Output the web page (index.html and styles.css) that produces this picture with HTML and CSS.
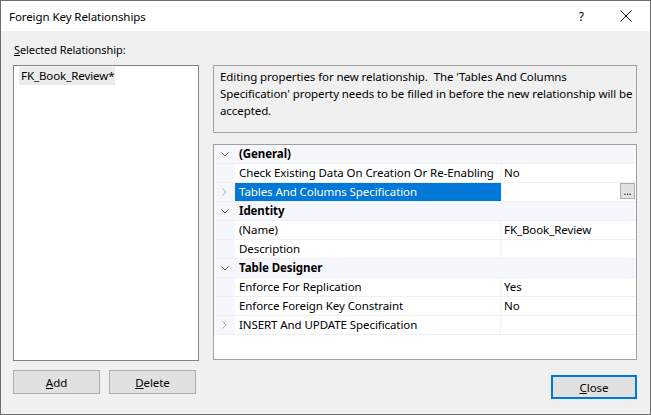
FILE: index.html
```html
<!DOCTYPE html>
<html>
<head>
<meta charset="utf-8">
<link rel="stylesheet" href="styles.css">
</head>
<body>
<div class="window">
  <div class="titlebar">
    <span class="title">Foreign Key Relationships</span>
    <span class="help">?</span>
    <svg class="close-x" width="12" height="12" viewBox="0 0 12 12"><path d="M0.5 0.5 L11.5 11.5 M11.5 0.5 L0.5 11.5" stroke="#000" stroke-width="1" fill="none"/></svg>
  </div>
  <div class="main">
    <div class="left">
      <div class="label"><u>S</u>elected Relationship:</div>
      <div class="listbox">
        <div class="list-item">FK_Book_Review*</div>
      </div>
      <div class="left-buttons">
        <button class="btn btn-add"><u>A</u>dd</button>
        <button class="btn btn-delete"><u>D</u>elete</button>
      </div>
    </div>
    <div class="right">
      <div class="desc">Editing properties for new relationship.&nbsp; The 'Tables And Columns<br>Specification' property needs to be filled in before the new relationship will be<br>accepted.</div>
      <div class="grid">
        <div class="row cat"><span class="gut"><svg width="8" height="5" viewBox="0 0 8 5"><path d="M0.5 0.5 L4 4 L7.5 0.5" stroke="#606060" fill="none"/></svg></span><span class="catname">(General)</span></div>
        <div class="row"><span class="gut"></span><span class="name">Check Existing Data On Creation Or Re-Enabling</span><span class="val">No</span></div>
        <div class="row"><span class="gut"><svg width="5" height="8" viewBox="0 0 5 8"><path d="M0.5 0.5 L4 4 L0.5 7.5" stroke="#a8a8a8" fill="none"/></svg></span><span class="name sel">Tables And Columns Specification</span><span class="val"><span class="dots">...</span></span></div>
        <div class="row cat"><span class="gut"><svg width="8" height="5" viewBox="0 0 8 5"><path d="M0.5 0.5 L4 4 L7.5 0.5" stroke="#606060" fill="none"/></svg></span><span class="catname">Identity</span></div>
        <div class="row"><span class="gut"></span><span class="name">(Name)</span><span class="val">FK_Book_Review</span></div>
        <div class="row"><span class="gut"></span><span class="name">Description</span><span class="val"></span></div>
        <div class="row cat"><span class="gut"><svg width="8" height="5" viewBox="0 0 8 5"><path d="M0.5 0.5 L4 4 L7.5 0.5" stroke="#606060" fill="none"/></svg></span><span class="catname">Table Designer</span></div>
        <div class="row"><span class="gut"></span><span class="name">Enforce For Replication</span><span class="val">Yes</span></div>
        <div class="row"><span class="gut"></span><span class="name">Enforce Foreign Key Constraint</span><span class="val">No</span></div>
        <div class="row"><span class="gut"><svg width="5" height="8" viewBox="0 0 5 8"><path d="M0.5 0.5 L4 4 L0.5 7.5" stroke="#a8a8a8" fill="none"/></svg></span><span class="name">INSERT And UPDATE Specification</span><span class="val"></span></div>
      </div>
      <div class="right-buttons">
        <button class="btn btn-close"><u>C</u>lose</button>
      </div>
    </div>
  </div>
</div>
</body>
</html>
```
FILE: styles.css
```css
* { box-sizing: border-box; }
html, body { margin: 0; padding: 0; }
body {
  width: 651px;
  height: 415px;
  font-family: "Noto Sans", "Open Sans", sans-serif;
  font-size: 11px;
  color: #000;
  background: #fff;
  overflow: hidden;
  letter-spacing: -0.08px;
}
.window {
  width: 651px;
  height: 415px;
  border: 1px solid #6e6e6e;
  background: #f0f0f0;
  display: flex;
  flex-direction: column;
}
.titlebar {
  height: 30px;
  background: #fff;
  display: flex;
  align-items: center;
  padding-left: 8px;
  flex: none;
}
.title { flex: 1; font-size: 11.5px; margin-top: 1px; }
.help { font-size: 12px; margin-right: 36px; margin-top: 1px; }
.close-x { margin-right: 18px; }
.main {
  display: flex;
  padding: 11px 13px 0 12px;
  gap: 13px;
}
.left { width: 187px; display: flex; flex-direction: column; }
.label { height: 23px; line-height: 16px; padding-left: 1px; }
.listbox {
  height: 296px;
  width: 186px;
  background: #fff;
  border: 1px solid #828282;
  padding: 1px 0 0 5px;
}
.list-item {
  display: inline-block;
  background: #ebebeb;
  height: 18px;
  line-height: 18px;
  padding: 0 1px 0 2px;
  font-size: 11.5px;
}
.left-buttons { display: flex; gap: 9px; margin-top: 9px; }
.btn {
  font-family: inherit;
  font-size: 11.5px;
  letter-spacing: -0.08px;
  background: #e1e1e1;
  border: 1px solid #adadad;
  height: 24px;
  padding: 0;
  color: #000;
}
.btn-add { width: 87px; }
.btn-delete { width: 87px; }
.right { width: 424px; padding-top: 23px; display: flex; flex-direction: column; }
.desc {
  height: 68px;
  border: 1px solid #a0a0a0;
  background: #f0f0f0;
  padding: 2px 0 2px 6px;
  line-height: 17px;
  font-size: 11.5px;
  white-space: nowrap;
}
.grid {
  margin-top: 11px;
  height: 216px;
  background: #fff;
  border: 1px solid #a0a0a0;
  display: flex;
  flex-direction: column;
}
.row {
  height: 19px;
  display: flex;
  border-bottom: 1px solid #f0f0f0;
  font-size: 11.5px;
  line-height: 18px;
}
.gut {
  width: 21px;
  flex: none;
  background: #f5f7fc;
  display: flex;
  align-items: center;
  justify-content: center;
}
.row.cat { background: #f5f7fc; }
.catname { font-weight: bold; padding-left: 4px; }
.name {
  width: 266px;
  flex: none;
  padding-left: 4px;
  border-right: 1px solid #f0f0f0;
  white-space: nowrap;
}
.name.sel { background: #0078d7; color: #fff; border-right-color: #0078d7; }
.val { flex: 1; padding-left: 3px; display: flex; align-items: center; position: relative; }
.dots {
  position: absolute;
  right: 1px;
  top: 0;
  width: 15px;
  height: 16px;
  background: #e1e1e1;
  border: 1px solid #adadad;
  font-size: 10px;
  line-height: 14px;
  text-align: center;
}
.right-buttons { display: flex; justify-content: flex-end; margin-top: 15px; }
.btn-close { width: 86px; border: 2px solid #0078d7; }
```
